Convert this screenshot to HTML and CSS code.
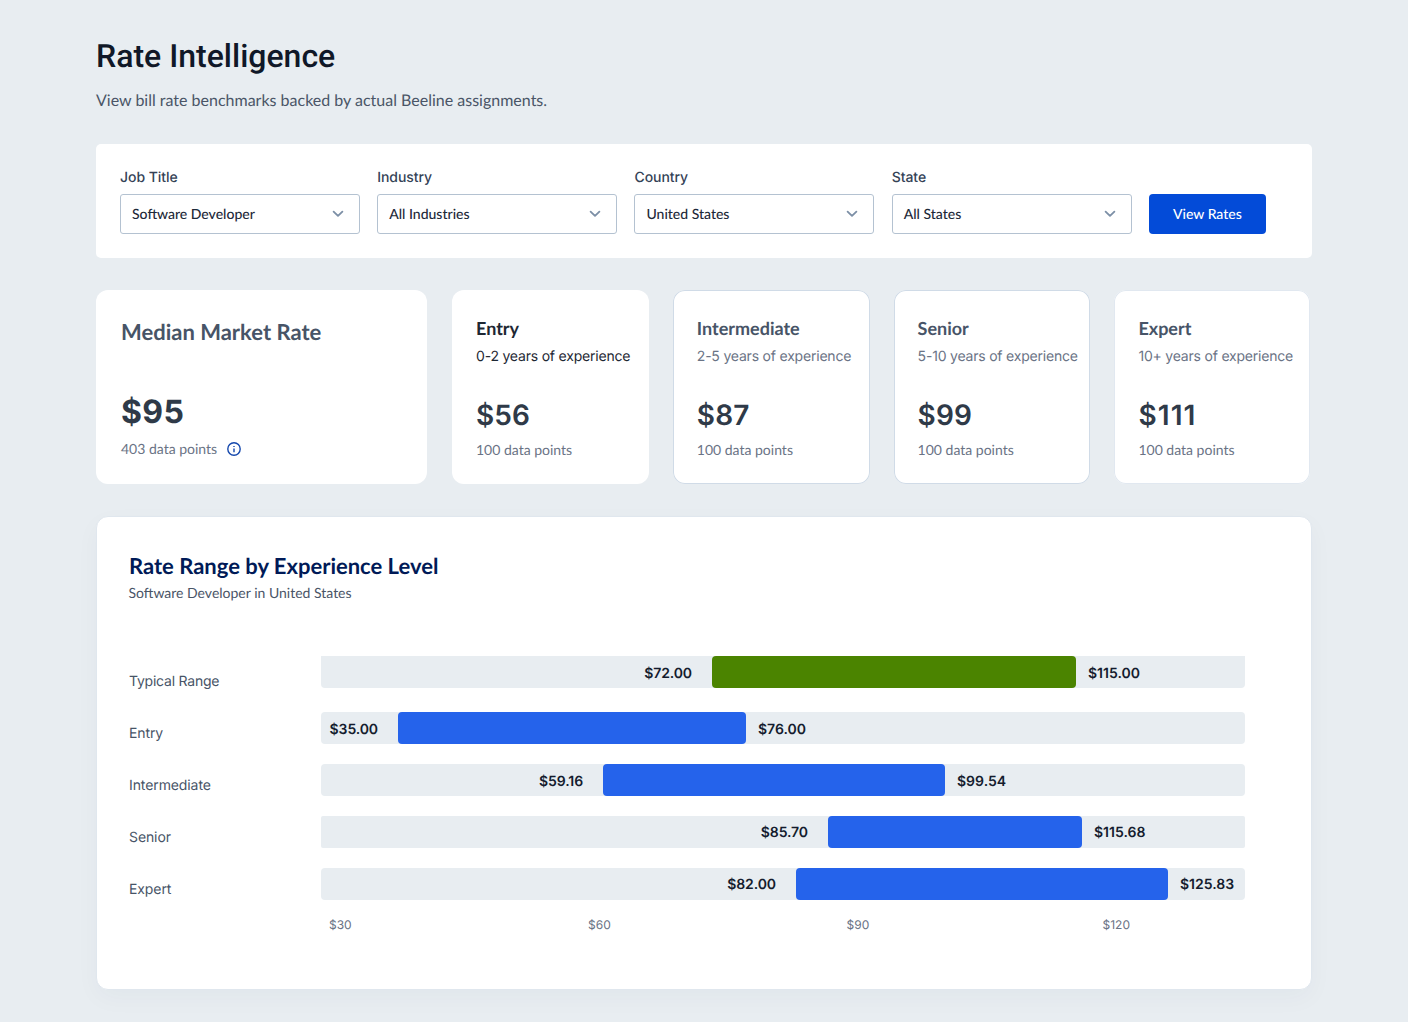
FILE: index.html
```html
<!DOCTYPE html>
<html lang="en">
<head>
<meta charset="utf-8">
<title>Rate Intelligence</title>
<link rel="stylesheet" href="styles.css">
</head>
<body>
<main class="page">
  <header class="page-header">
    <h1 class="page-title">Rate Intelligence</h1>
    <p class="page-subtitle">View bill rate benchmarks backed by actual Beeline assignments.</p>
  </header>

  <section class="filters">
    <div class="field">
      <span class="field-label">Job Title</span>
      <div class="select"><span>Software Developer</span><svg class="chevron" viewBox="0 0 12 8"><path d="M1.6 1.6 6 5.9l4.400-4.300"/></svg></div>
    </div>
    <div class="field">
      <span class="field-label">Industry</span>
      <div class="select"><span>All Industries</span><svg class="chevron" viewBox="0 0 12 8"><path d="M1.6 1.6 6 5.9l4.400-4.300"/></svg></div>
    </div>
    <div class="field">
      <span class="field-label">Country</span>
      <div class="select"><span>United States</span><svg class="chevron" viewBox="0 0 12 8"><path d="M1.6 1.6 6 5.9l4.400-4.300"/></svg></div>
    </div>
    <div class="field">
      <span class="field-label">State</span>
      <div class="select"><span>All States</span><svg class="chevron" viewBox="0 0 12 8"><path d="M1.6 1.6 6 5.9l4.400-4.300"/></svg></div>
    </div>
    <button class="button">View Rates</button>
  </section>

  <section class="cards">
    <article class="card card-median">
      <h2 class="median-title">Median Market Rate</h2>
      <div class="median-rate">$95</div>
      <div class="median-points"><span>403 data points</span><svg class="info" viewBox="0 0 14 14"><circle cx="7" cy="7" r="6.200"/><path d="M7 6.500v3.700M7 3.900v1.200"/></svg></div>
    </article>
    <article class="card card-active">
      <h3 class="card-title">Entry</h3>
      <div class="card-years">0-2 years of experience</div>
      <div class="card-rate">$56</div>
      <div class="card-points">100 data points</div>
    </article>
    <article class="card card-outlined">
      <h3 class="card-title">Intermediate</h3>
      <div class="card-years">2-5 years of experience</div>
      <div class="card-rate">$87</div>
      <div class="card-points">100 data points</div>
    </article>
    <article class="card card-outlined">
      <h3 class="card-title">Senior</h3>
      <div class="card-years">5-10 years of experience</div>
      <div class="card-rate">$99</div>
      <div class="card-points">100 data points</div>
    </article>
    <article class="card card-soft">
      <h3 class="card-title">Expert</h3>
      <div class="card-years">10+ years of experience</div>
      <div class="card-rate card-rate-wide">$111</div>
      <div class="card-points">100 data points</div>
    </article>
  </section>

  <section class="panel">
    <h2 class="panel-title">Rate Range by Experience Level</h2>
    <p class="panel-subtitle">Software Developer in United States</p>
    <div class="chart">
      <div class="row row-typical">
        <span class="row-label">Typical Range</span>
        <div class="track track-bottom"><span class="low" style="width:391px">$72.00</span><span class="bar bar-typical" style="width:364px"></span><span class="high">$115.00</span></div>
      </div>
      <div class="row">
        <span class="row-label">Entry</span>
        <div class="track"><span class="low" style="width:77px">$35.00</span><span class="bar" style="width:348px"></span><span class="high">$76.00</span></div>
      </div>
      <div class="row">
        <span class="row-label">Intermediate</span>
        <div class="track"><span class="low" style="width:282px">$59.16</span><span class="bar" style="width:342px"></span><span class="high">$99.54</span></div>
      </div>
      <div class="row">
        <span class="row-label">Senior</span>
        <div class="track track-tight"><span class="low" style="width:507px">$85.70</span><span class="bar" style="width:254px"></span><span class="high">$115.68</span></div>
      </div>
      <div class="row">
        <span class="row-label">Expert</span>
        <div class="track track-raised"><span class="low" style="width:475px">$82.00</span><span class="bar" style="width:372px"></span><span class="high">$125.83</span></div>
      </div>
      <div class="axis"><span>$30</span><span>$60</span><span>$90</span><span>$120</span></div>
    </div>
  </section>
</main>
</body>
</html>
```
FILE: styles.css
```css
* {
  box-sizing: border-box;
}

body {
  margin: 0;
  min-height: 1022px;
  background: #e8edf1;
  font-family: Inter, sans-serif;
  color: #475467;
  text-rendering: geometricPrecision;
}

h1, h2, h3, p {
  margin: 0;
}

.page {
  width: 1216px;
  margin: 0 auto;
  padding-top: 36px;
}

.page-header {
  height: 108px;
}

.page-title {
  font: 500 32px/40px Roboto, sans-serif;
  color: #101828;
}

.page-subtitle {
  margin-top: 13px;
  font: 400 16px/24px Lato, sans-serif;
  color: #4a5567;
}

.filters {
  display: flex;
  align-items: flex-end;
  gap: 17.240px;
  height: 114px;
  padding: 24px;
  background: #fff;
  border-radius: 5px;
}

.field {
  width: 240px;
}

.field-label {
  display: block;
  margin-bottom: 6px;
  font-size: 14px;
  font-weight: 500;
  line-height: 20px;
  letter-spacing: -0.060px;
  color: #344256;
}

.select {
  display: flex;
  align-items: center;
  justify-content: space-between;
  height: 40px;
  padding: 0 15px 0 11px;
  border: 1px solid #b4c2d1;
  border-radius: 3px;
  font: 500 14px/20px Lato, sans-serif;
  color: #1d2939;
}

.chevron {
  width: 12px;
  height: 8px;
  fill: none;
  stroke: #7c8fa6;
  stroke-width: 1.800;
  stroke-linecap: round;
  stroke-linejoin: round;
}

.button {
  width: 117px;
  height: 40px;
  padding: 0;
  border: 0;
  border-radius: 4px;
  background: #034bd8;
  color: #fff;
  font: 500 14px/20px Lato, sans-serif;
  text-rendering: inherit;
}

.cards {
  display: flex;
  gap: 24px;
  margin-top: 32px;
}

.card {
  width: 196.800px;
  height: 194px;
  padding: 26px 0 0 24px;
  background: #fff;
  border-radius: 12px;
  white-space: nowrap;
}

.card-outlined {
  box-shadow: inset 0 0 0 1px #d0dbe7;
}

.card-soft {
  width: 196px;
  box-shadow: inset 0 0 0 1px #e1e8f0;
}

.card-median {
  width: 331px;
  margin-right: 1px;
  padding: 26px 0 0 25px;
}

.median-title {
  font: 700 22px/32px Lato, sans-serif;
  color: #475467;
}

.median-rate {
  margin-top: 44px;
  font-size: 32px;
  font-weight: 700;
  line-height: 40px;
  letter-spacing: 0.400px;
  color: #2f3a48;
}

.median-points {
  display: flex;
  align-items: center;
  gap: 10px;
  margin-top: 7px;
  font: 400 14px/20px Lato, sans-serif;
  color: #6a7385;
}

.info {
  width: 14px;
  height: 14px;
  fill: none;
  stroke: #1548ad;
  stroke-width: 1.400;
}

.card-title {
  font: 700 18px/25px Lato, sans-serif;
  color: #475467;
}

.card-years {
  margin-top: 6px;
  font-size: 14px;
  line-height: 20px;
  letter-spacing: -0.200px;
  color: #6a7385;
}

.card-active .card-title,
.card-active .card-years {
  color: #1d2733;
}

.card-rate {
  margin-top: 30px;
  font-size: 28px;
  font-weight: 600;
  line-height: 36px;
  letter-spacing: 0.150px;
  color: #2f3a48;
}

.card-rate-wide {
  letter-spacing: 1.100px;
}

.card-points {
  margin-top: 7px;
  font: 400 14px/20px Lato, sans-serif;
  color: #6a7385;
}

.panel {
  height: 474px;
  margin-top: 32px;
  padding: 33px 32px 0;
  background: #fff;
  border: 1px solid #e0e7ee;
  border-radius: 12px;
  box-shadow: 0 8px 24px rgba(30, 45, 80, 0.035);
}

.panel-title {
  font: 700 22px/32px Lato, sans-serif;
  color: #001a57;
}

.panel-subtitle {
  margin: 1px 0 0 -0.500px;
  font: 400 14px/20px Lato, sans-serif;
  color: #4a5567;
}

.chart {
  margin-top: 53px;
}

.row {
  display: flex;
  height: 52px;
}

.row-typical {
  height: 56px;
}

.row-label {
  width: 192px;
  padding-top: 12px;
  font-size: 14px;
  line-height: 20px;
  letter-spacing: -0.100px;
}

.row-typical .row-label {
  padding-top: 16px;
  letter-spacing: -0.220px;
}

.track {
  display: flex;
  width: 924px;
  height: 32px;
  border-radius: 4px;
  background: #e8edf1;
  font-size: 14px;
  font-weight: 600;
  line-height: 35px;
  letter-spacing: -0.100px;
  color: #141c2e;
}

.track-bottom {
  border-radius: 0 0 4px 4px;
}

.track-tight {
  border-radius: 2px;
}

.track-tight,
.track-raised {
  line-height: 33px;
}

.low {
  padding-right: 20px;
  text-align: right;
}

.bar {
  border-radius: 4px;
  background: #2563eb;
}

.bar-typical {
  background: #4b8400;
}

.high {
  padding-left: 12px;
  letter-spacing: 0;
}

.axis {
  display: grid;
  grid-template-columns: 259px 258.500px 256px auto;
  margin-top: -3px;
  padding-left: 200px;
  font-size: 12px;
  line-height: 16px;
  color: #6a7385;
}
```
